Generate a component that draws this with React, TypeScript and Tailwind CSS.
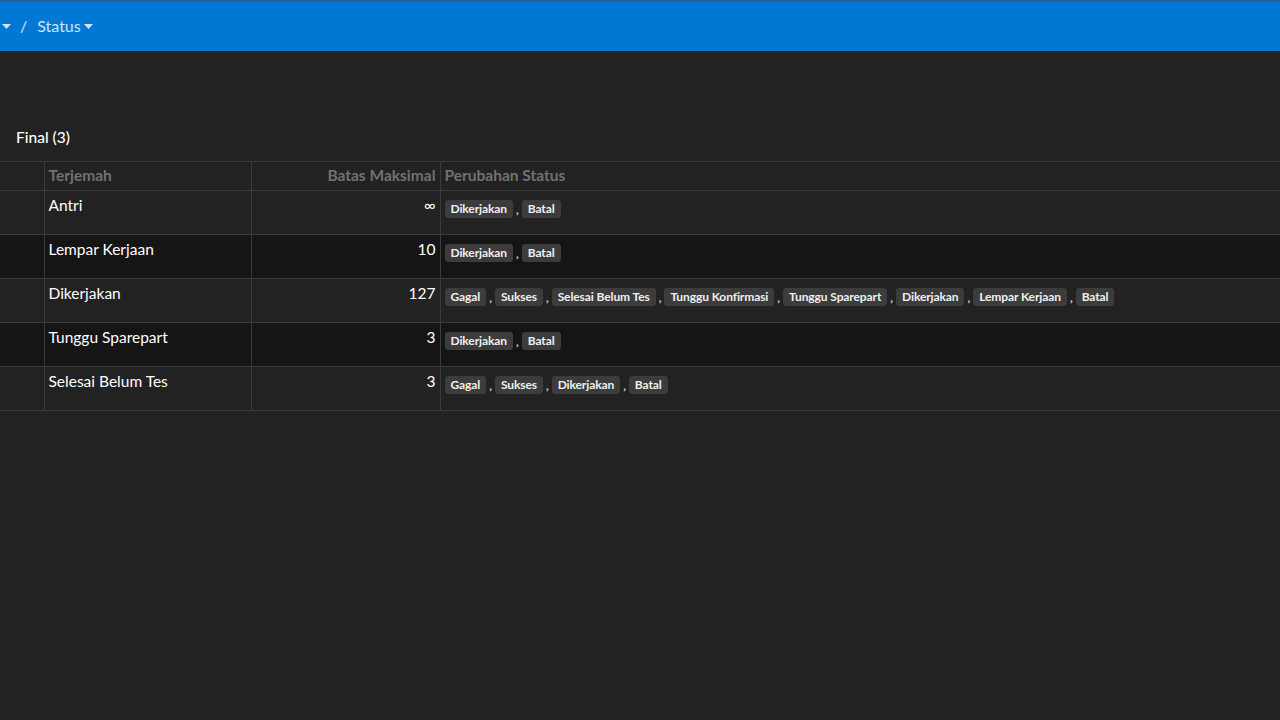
import React from "react"

type Row = {
  name: string
  max: string
  next: string[]
}

const rows: Row[] = [
  { name: "Antri", max: "∞", next: ["Dikerjakan", "Batal"] },
  { name: "Lempar Kerjaan", max: "10", next: ["Dikerjakan", "Batal"] },
  {
    name: "Dikerjakan",
    max: "127",
    next: [
      "Gagal",
      "Sukses",
      "Selesai Belum Tes",
      "Tunggu Konfirmasi",
      "Tunggu Sparepart",
      "Dikerjakan",
      "Lempar Kerjaan",
      "Batal",
    ],
  },
  { name: "Tunggu Sparepart", max: "3", next: ["Dikerjakan", "Batal"] },
  { name: "Selesai Belum Tes", max: "3", next: ["Gagal", "Sukses", "Dikerjakan", "Batal"] },
]

function Caret() {
  return (
    <svg width="9" height="5" viewBox="0 0 9 5" className="inline-block">
      <path d="M0 0h9L4.5 5z" fill="currentColor" />
    </svg>
  )
}

export default function App() {
  return (
    <div className="min-h-[720px] w-full bg-[#222222] text-white font-['Lato','Noto_Sans',sans-serif]">
      <header className="h-[51px] bg-[#0078d4] border-t-2 border-[#2d5f8c] flex items-center text-[16px] text-[#cfe5f8]">
        <div className="flex items-center pl-[2px] gap-[9px] -mt-[1px]">
          <span className="flex items-center"><Caret /></span>
          <span>/</span>
          <span className="flex items-center gap-[3px] ml-[1px]">
            Status
            <Caret />
          </span>
        </div>
      </header>

      <div className="pt-[76px]">
        <h2 className="pl-4 text-[15.5px] font-medium leading-[20px] h-[34px]">Final (3)</h2>

        <table className="w-full border-collapse text-[15.5px] table-fixed">
          <colgroup>
            <col className="w-[44px]" />
            <col className="w-[207px]" />
            <col className="w-[189px]" />
            <col />
          </colgroup>
          <thead>
            <tr className="h-[29px] border-t border-b border-[#3b3b3b] text-[#717171] font-bold text-[15.5px]">
              <th className="border-r border-[#3b3b3b]"></th>
              <th className="text-left px-[4px] border-r border-[#3b3b3b]">Terjemah</th>
              <th className="text-right px-[4px] border-r border-[#3b3b3b]">Batas Maksimal</th>
              <th className="text-left px-[4px]">Perubahan Status</th>
            </tr>
          </thead>
          <tbody>
            {rows.map((row, i) => (
              <tr
                key={row.name}
                className={`h-[44px] border-b border-[#3b3b3b] align-top ${i % 2 === 1 ? "bg-[#151515]" : "bg-[#222222]"}`}
              >
                <td className="border-r border-[#3b3b3b]"></td>
                <td className="px-[4px] pt-[4px] leading-[20px] border-r border-[#3b3b3b]">{row.name}</td>
                <td className="px-[4px] pt-[4px] leading-[20px] text-right border-r border-[#3b3b3b]">{row.max}</td>
                <td className="px-[4px] pt-[7px]">
                  <div className="flex items-center gap-[3px] text-[12px] font-bold tracking-[-0.1px]">
                    {row.next.map((tag, j) => (
                      <React.Fragment key={tag + j}>
                        {j > 0 && <span className="text-[#cfcfcf] mt-[3px]">,</span>}
                        <span className="bg-[#3c3c3c] rounded-[3px] px-[6px] h-[18px] leading-[18px] text-[#f0f0f0]">
                          {tag}
                        </span>
                      </React.Fragment>
                    ))}
                  </div>
                </td>
              </tr>
            ))}
          </tbody>
        </table>
      </div>
    </div>
  )
}
